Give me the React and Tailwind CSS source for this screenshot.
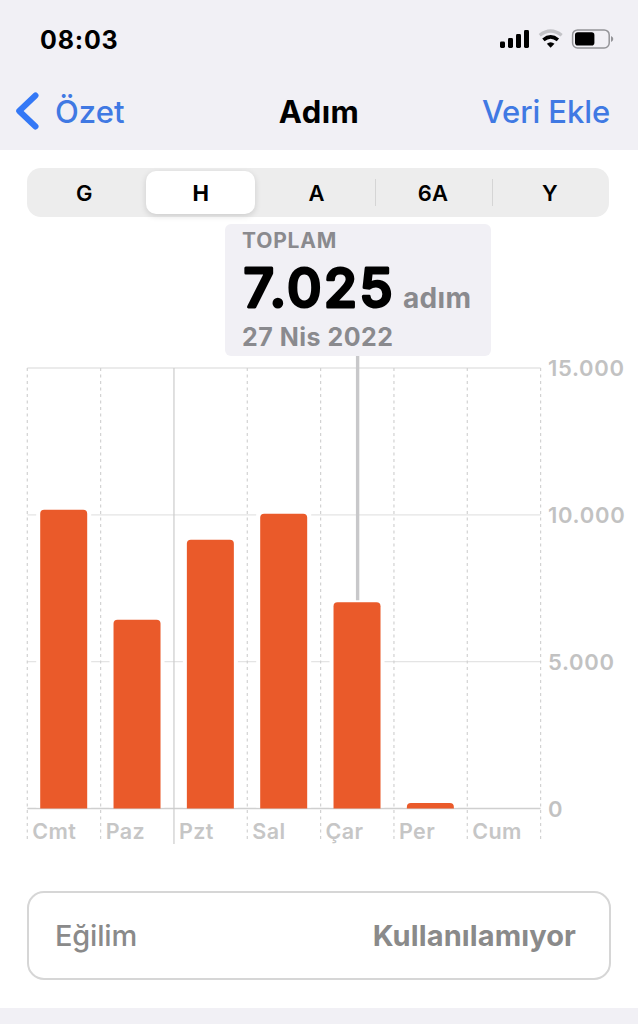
import React, { useState } from 'react';

const DAYS = [
  { label: 'Cmt', steps: 10170 },
  { label: 'Paz', steps: 6430 },
  { label: 'Pzt', steps: 9150 },
  { label: 'Sal', steps: 10040 },
  { label: 'Çar', steps: 7025 },
  { label: 'Per', steps: 190 },
  { label: 'Cum', steps: 0 },
];

const TICKS = [
  { value: 15000, label: '15.000' },
  { value: 10000, label: '10.000' },
  { value: 5000, label: '5.000' },
  { value: 0, label: '0' },
];

const RANGES = ['G', 'H', 'A', '6A', 'Y'];

// Chart geometry
const LEFT = 27.3;
const STEP = 73.33;
const BAR_WIDTH = 47;
const BASE = 452.5;
const TOP = 12;
const SELECTED = 4;

const yFor = (value) => BASE - (value / 15000) * (BASE - TOP);

const StatusBar = () => (
  <div className="flex h-[78px] items-center justify-between pl-10 pr-6">
    <span className="pt-[2px] text-[25px] font-bold leading-none tracking-[0.8px]">08:03</span>
    <svg width="115" height="22" viewBox="0 0 115 22" className="mt-[2px] shrink-0">
      {/* Signal */}
      <rect x="1" y="12.5" width="5" height="6.5" rx="1.4" />
      <rect x="9" y="9" width="5" height="10" rx="1.4" />
      <rect x="17" y="5" width="5" height="14" rx="1.4" />
      <rect x="25" y="1" width="5" height="18" rx="1.4" />
      {/* Wi-Fi */}
      <path d="M40.7 6.2 Q51.6 -2.2 62.7 6.2" fill="none" stroke="#c3c3c7" strokeWidth="3.2" />
      <path d="M44.4 10.9 Q51.6 4.9 58.9 10.9" fill="none" stroke="#000" strokeWidth="3.6" />
      <path d="M47.8 14.8 Q51.6 11.6 55.5 14.8 L51.6 18.8 Z" />
      {/* Battery */}
      <rect x="73.6" y="0.9" width="36.6" height="18" rx="5" fill="none" stroke="#949498" strokeWidth="1.5" />
      <rect x="76" y="3.3" width="19.4" height="13.2" rx="2.8" />
      <path d="M112 7 Q114.3 8 114.3 10 Q114.3 12 112 13 Z" fill="#949498" />
    </svg>
  </div>
);

const NavBar = () => (
  <div className="grid h-[72px] grid-cols-[1fr_auto_1fr] items-center px-4 pb-[6px]">
    <button className="flex items-center gap-[16px] text-[#3478f6]">
      <svg width="23" height="38" viewBox="0 0 23 38">
        <path
          d="M19.5 3.5 L3.2 19 L19.5 34.5"
          fill="none"
          stroke="currentColor"
          strokeWidth="6"
          strokeLinecap="round"
          strokeLinejoin="round"
        />
      </svg>
      <span className="text-[31px] font-medium leading-none tracking-[0.1px] text-[#4079e3]">Özet</span>
    </button>
    <h1 className="text-center text-[31px] font-bold leading-none tracking-[0.4px]">Adım</h1>
    <button className="whitespace-nowrap pr-3 text-right text-[31px] font-medium leading-none tracking-[-0.1px] text-[#4079e3]">
      Veri Ekle
    </button>
  </div>
);

const RangePicker = ({ value, onChange }) => (
  <div className="ml-[27px] mt-[18px] grid h-[49px] w-[582px] grid-cols-5 rounded-[14px] bg-[#ededed] py-[3px]">
    {RANGES.map((range, i) => (
      <button
        key={range}
        onClick={() => onChange(range)}
        className="flex items-center"
      >
        <span
          className={
            range === value
              ? 'ml-[3px] mr-[5px] flex h-full flex-1 items-center justify-center rounded-[10px] bg-white pt-px text-[22px] font-bold shadow-[0_2px_6px_rgba(0,0,0,0.14)]'
              : 'flex h-full flex-1 items-center justify-center pr-[2px] pt-px text-[22px] font-semibold'
          }
        >
          {range}
        </span>
        {i >= 2 && i < 4 && <span className="h-[27px] w-px bg-[#d5d5d5]" />}
      </button>
    ))}
  </div>
);

const Callout = () => (
  <div className="ml-[225px] mt-[7px] h-[132px] w-[266px] rounded-[6px] bg-[#f1f0f5] pl-[17px] pt-[7px] text-[#8a8a8e]">
    <p className="text-[21px] font-bold leading-[20px] tracking-[0.8px]">TOPLAM</p>
    <div className="flex h-[70px] items-start">
      {/* Round joins soften the corners of the big figure */}
      <svg width="161" height="70" viewBox="0 0 161 70" className="shrink-0">
        <text
          x="1.5"
          y="56"
          fontSize="53.5"
          fontWeight="500"
          textLength="149"
          stroke="#000"
          strokeWidth="3"
          strokeLinejoin="round"
        >
          7.025
        </text>
      </svg>
      <span className="mt-[33px] text-[28px] font-bold leading-[28px] tracking-[0.3px]">adım</span>
    </div>
    <p className="pt-px text-[25px] font-bold leading-[30px] tracking-[0.5px]">27 Nis 2022</p>
  </div>
);

const StepChart = () => (
  <svg width="638" height="496" viewBox="0 0 638 496" className="block">
    {TICKS.map((tick) => (
      <g key={tick.label}>
        <line
          x1={LEFT}
          x2={LEFT + STEP * 7}
          y1={yFor(tick.value)}
          y2={yFor(tick.value)}
          stroke={tick.value === 0 ? '#cfcfcf' : '#e4e4e4'}
          strokeWidth="1.3"
        />
        <text x="548" y={yFor(tick.value) + 8} fontSize="22" fontWeight="600" letterSpacing="0.7" fill="#c2c2c2">
          {tick.label}
        </text>
      </g>
    ))}

    {/* Day separators, the week start is solid */}
    {[0, 1, 2, 3, 4, 5, 6, 7].map((i) => (
      <line
        key={i}
        x1={LEFT + STEP * i}
        x2={LEFT + STEP * i}
        y1={TOP}
        y2={i === 2 ? 488 : 486}
        stroke={i === 2 ? '#cccccc' : '#d2d2d2'}
        strokeWidth="1.2"
        strokeDasharray={i === 2 ? undefined : '3 3.5'}
      />
    ))}

    {DAYS.map((day, i) => {
      const x = LEFT + STEP * i + 12.9;
      const y = yFor(day.steps);
      return (
        <g key={day.label}>
          {day.steps > 0 && (
            <>
              {/* White gap between the bar and the grid lines */}
              <rect x={x - 4} y={y} width={BAR_WIDTH + 8} height={BASE - y - 1} fill="#fff" />
              <path
                d={`M${x} ${BASE} V${y + 4} Q${x} ${y} ${x + 4} ${y} H${x + BAR_WIDTH - 4} Q${x + BAR_WIDTH} ${y} ${x + BAR_WIDTH} ${y + 4} V${BASE} Z`}
                fill="#ea5a2a"
              />
            </>
          )}
          <text x={LEFT + STEP * i + 5} y="482.5" fontSize="21.5" fontWeight="600" letterSpacing="0.4" fill="#c6c6c6">
            {day.label}
          </text>
        </g>
      );
    })}

    <line
      x1={LEFT + STEP * SELECTED + 37}
      x2={LEFT + STEP * SELECTED + 37}
      y1="0"
      y2={yFor(DAYS[SELECTED].steps) - 2}
      stroke="#c8c8ca"
      strokeWidth="3.4"
    />
  </svg>
);

const App = () => {
  const [range, setRange] = useState('H');

  return (
    <div className="flex h-[1024px] w-[638px] flex-col overflow-hidden bg-white font-['Inter',sans-serif] text-black">
      <header className="h-[150px] shrink-0 bg-[#f1f0f5]">
        <StatusBar />
        <NavBar />
      </header>

      <main className="flex-1">
        <RangePicker value={range} onChange={setRange} />
        <Callout />
        <StepChart />
        <div className="ml-[27px] mt-[39px] flex h-[89px] w-[584px] items-center justify-between rounded-[17px] border-2 border-[#d6d6d6] pl-[26px] pr-[33px] pt-px text-[29px] text-[#8a8a8a]">
          <span className="font-medium tracking-[-0.2px]">Eğilim</span>
          <span className="font-bold tracking-[0.1px]">Kullanılamıyor</span>
        </div>
      </main>

      <footer className="h-[16px] shrink-0 bg-[#f1f0f5]" />
    </div>
  );
};

export default App;
